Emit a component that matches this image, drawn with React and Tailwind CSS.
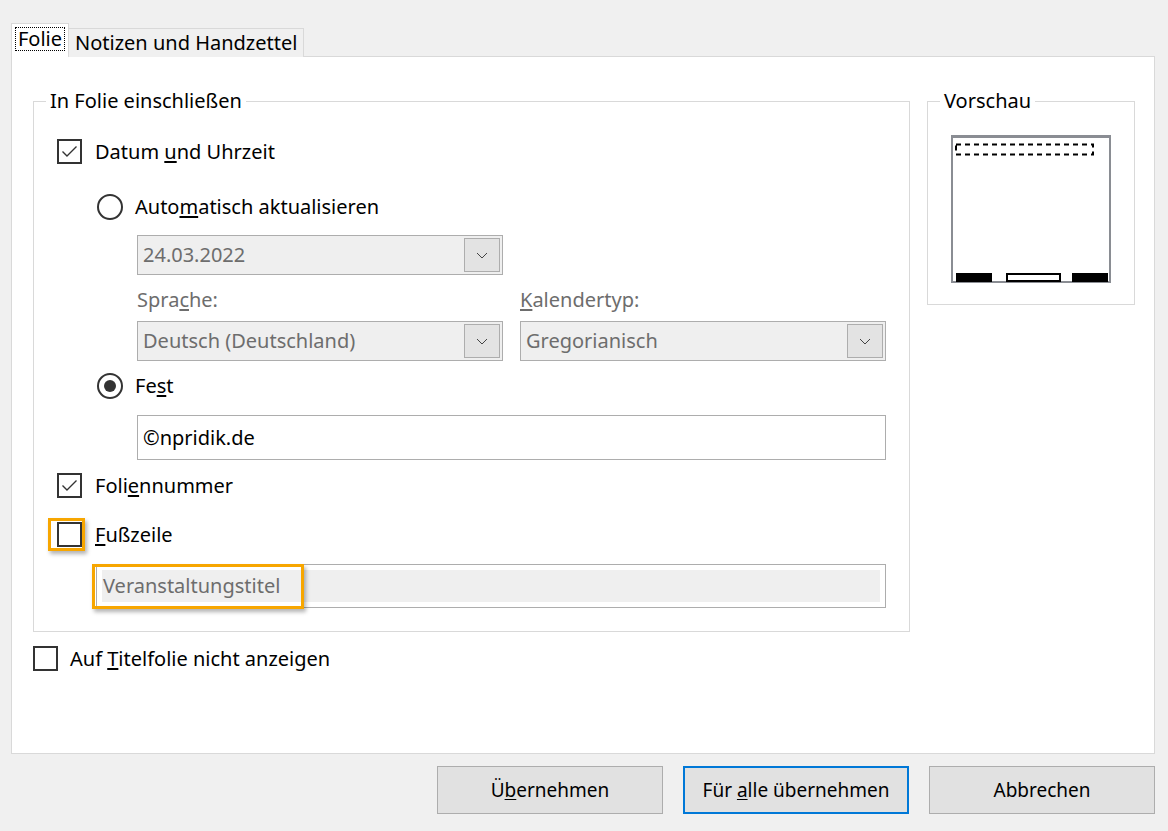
import React from "react";

const font = { fontFamily: '"Noto Sans", "Open Sans", sans-serif' };

function Check({ checked }) {
  return (
    <div className="w-[25px] h-[25px] border-2 border-[#333333] bg-white flex items-center justify-center shrink-0">
      {checked && (
        <svg width="17" height="13" viewBox="0 0 17 13">
          <path d="M1.5 6.5 L6 11 L15.5 1.5" fill="none" stroke="#333" strokeWidth="1.4" />
        </svg>
      )}
    </div>
  );
}

function Radio({ checked }) {
  return (
    <div className="w-[26px] h-[26px] rounded-full border-2 border-[#333333] bg-white flex items-center justify-center shrink-0">
      {checked && <div className="w-[12px] h-[12px] rounded-full bg-[#333333]" />}
    </div>
  );
}

function Chevron() {
  return (
    <svg width="12" height="7" viewBox="0 0 12 7">
      <path d="M1 1 L6 6 L11 1" fill="none" stroke="#444" strokeWidth="1" />
    </svg>
  );
}

function Dropdown({ value, width }) {
  return (
    <div
      className={`${width} h-[40px] border border-[#adadad] bg-[#efefef] flex items-center justify-between pl-[5px] pr-[2px]`}
    >
      <span className="text-[#6d6d6d]">{value}</span>
      <div className="w-[36px] h-[34px] border border-[#adadad] bg-[#e3e3e3] flex items-center justify-center">
        <Chevron />
      </div>
    </div>
  );
}

function Preview() {
  return (
    <svg width="160" height="148" viewBox="0 0 160 148">
      <rect x="0" y="0" width="160" height="148" fill="#fff" />
      <rect x="1" y="1.5" width="158" height="145.5" fill="none" stroke="#8a8d93" strokeWidth="2" />
      <rect x="0" y="0" width="160" height="3" fill="#8a8d93" />
      <rect x="5" y="9.5" width="137" height="10" fill="none" stroke="#000" strokeWidth="2" strokeDasharray="5 4" />
      <rect x="5" y="138" width="36" height="9" fill="#000" />
      <rect x="56" y="139" width="53" height="7" fill="#fff" stroke="#000" strokeWidth="2" />
      <rect x="121" y="138" width="36" height="9" fill="#000" />
    </svg>
  );
}

export default function App() {
  return (
    <div className="w-[1168px] h-[831px] bg-[#f0f0f0] text-black text-[20px] leading-[26px] flex flex-col" style={font}>
      {/* Tabs */}
      <div className="flex items-end pl-[11px] pt-[23px] h-[57px] relative z-10">
        <div className="w-[58px] h-[34px] border border-b-0 border-[#d9d9d9] bg-white flex items-start justify-center pt-[3px]">
          <div className="border border-dotted border-black px-[2px] leading-[22px]">Folie</div>
        </div>
        <div className="h-[29px] border border-b-0 border-l-0 border-[#d9d9d9] bg-[#f0f0f0] px-[6px] flex items-center">
          Notizen und Handzettel
        </div>
      </div>

      {/* Panel */}
      <div className="ml-[11px] w-[1144px] h-[698px] -mt-px border border-[#d9d9d9] bg-white pt-[44px] pl-[21px]">
        <div className="flex gap-[17px] items-start">
          {/* Group 1 */}
          <div className="relative w-[877px] h-[531px] border border-[#d9d9d9] pl-[23px] pt-[37px]">
            <span className="absolute left-[12px] -top-[14px] bg-white px-[4px]">In Folie einschließen</span>

            <div className="flex items-center gap-[13px] h-[25px]">
              <Check checked />
              <span>
                Datum <u className="underline-offset-2">u</u>nd Uhrzeit
              </span>
            </div>

            <div className="pl-[40px]">
              <div className="flex items-center gap-[12px] h-[26px] mt-[30px]">
                <Radio />
                <span>
                  Auto<u className="underline-offset-2">m</u>atisch aktualisieren
                </span>
              </div>

              <div className="pl-[40px]">
                <div className="mt-[15px]">
                  <Dropdown value="24.03.2022" width="w-[366px]" />
                </div>
                <div className="flex gap-[17px] mt-[12px] h-[26px] text-[#6d6d6d]">
                  <span className="w-[366px]">
                    Spra<u className="underline-offset-2">c</u>he:
                  </span>
                  <span>
                    <u className="underline-offset-2">K</u>alendertyp:
                  </span>
                </div>
                <div className="flex gap-[17px] mt-[8px]">
                  <Dropdown value="Deutsch (Deutschland)" width="w-[366px]" />
                  <Dropdown value="Gregorianisch" width="w-[366px]" />
                </div>
              </div>

              <div className="flex items-center gap-[12px] h-[26px] mt-[12px]">
                <Radio checked />
                <span>
                  Fe<u className="underline-offset-2">s</u>t
                </span>
              </div>

              <div className="pl-[40px] mt-[16px]">
                <div className="w-[749px] h-[45px] border border-[#adadad] bg-white flex items-center pl-[5px]">
                  ©npridik.de
                </div>
              </div>
            </div>

            <div className="flex items-center gap-[13px] h-[25px] mt-[13px]">
              <Check checked />
              <span>
                Foli<u className="underline-offset-2">e</u>nnummer
              </span>
            </div>

            <div className="relative flex items-center gap-[13px] h-[25px] mt-[24px]">
              <Check />
              <span>
                <u className="underline-offset-2">F</u>ußzeile
              </span>
              <div className="absolute -left-[9px] -top-[4px] w-[37px] h-[33px] border-[3px] border-[#f7a600] shadow-[2px_3px_4px_rgba(0,0,0,0.3)]" />
            </div>

            <div className="pl-[39px] mt-[17px]">
              <div className="relative w-[790px] h-[44px] border border-[#adadad] bg-white p-[5px]">
                <div className="w-full h-full bg-[#efefef] flex items-center pl-[1px] text-[#6d6d6d]">
                  Veranstaltungstitel
                </div>
                <div className="absolute -left-[5px] -top-[1px] w-[212px] h-[45px] border-[3px] border-[#f7a600] shadow-[2px_3px_4px_rgba(0,0,0,0.3)]" />
              </div>
            </div>
          </div>

          {/* Vorschau */}
          <div className="relative w-[208px] h-[204px] border border-[#d9d9d9] pt-[33px] pl-[23px]">
            <span className="absolute left-[12px] -top-[14px] bg-white px-[4px]">Vorschau</span>
            <Preview />
          </div>
        </div>

        <div className="flex items-center gap-[12px] mt-[14px] h-[25px]">
          <Check />
          <span>
            Auf <u className="underline-offset-2">T</u>itelfolie nicht anzeigen
          </span>
        </div>
      </div>

      {/* Buttons */}
      <div className="flex justify-end gap-[20px] pr-[13px] mt-[12px]">
        <button className="w-[226px] h-[48px] border border-[#adadad] bg-[#e1e1e1] text-[19px]">
          Ü<u className="underline-offset-2">b</u>ernehmen
        </button>
        <button className="w-[226px] h-[48px] border-2 border-[#0078d7] bg-[#e1e1e1] text-[19px]">
          Für <u className="underline-offset-2">a</u>lle übernehmen
        </button>
        <button className="w-[226px] h-[48px] border border-[#adadad] bg-[#e1e1e1] text-[19px]">
          Abbrechen
        </button>
      </div>
    </div>
  );
}
